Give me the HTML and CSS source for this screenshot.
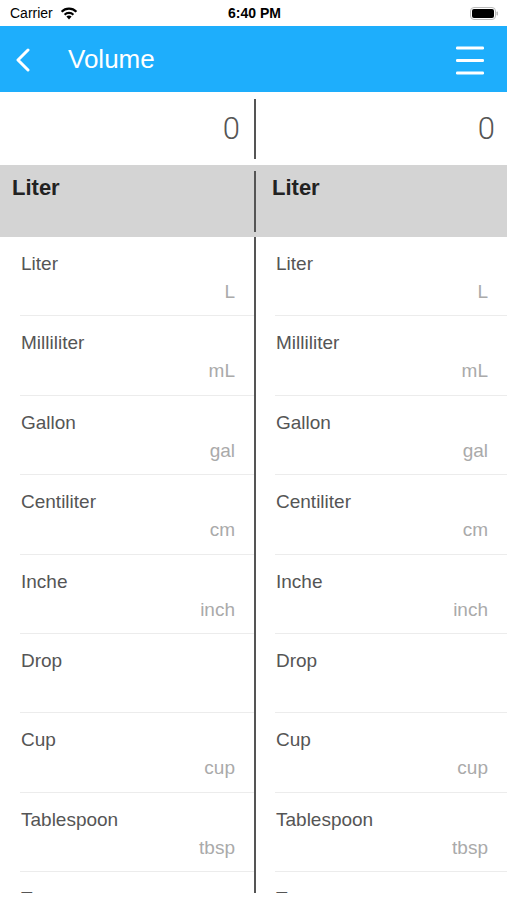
FILE: index.html
```html
<!DOCTYPE html>
<html lang="en">
<head>
  <meta charset="UTF-8">
  <title>Volume</title>
  <link rel="stylesheet" href="styles.css">
</head>
<body>
  <div class="status-bar">
    <div class="status-left">
      <span>Carrier</span>
      <svg class="wifi" width="18" height="13" viewBox="0 0 18 13">
        <path d="M9 12.5 L6.4 9.6 A3.8 3.8 0 0 1 11.6 9.6 Z" fill="#000"/>
        <path d="M4.6 7.7 A6.3 6.3 0 0 1 13.4 7.7" stroke="#000" stroke-width="2.2" fill="none"/>
        <path d="M1.6 4.7 A10.5 10.5 0 0 1 16.4 4.7" stroke="#000" stroke-width="2.2" fill="none"/>
      </svg>
    </div>
    <div class="status-time">6:40 PM</div>
    <div class="status-right">
      <svg width="29" height="13" viewBox="0 0 29 13">
        <rect x="0.5" y="0.5" width="25" height="12" rx="3.5" fill="none" stroke="#bbb"/>
        <rect x="2" y="2" width="22" height="9" rx="2" fill="#000"/>
        <rect x="26.5" y="4.5" width="1.5" height="4" rx="0.7" fill="#bbb"/>
      </svg>
    </div>
  </div>

  <div class="nav-bar">
    <svg class="back" width="16" height="24" viewBox="0 0 16 24">
      <path d="M13 2 L3 12 L13 22" stroke="#fff" stroke-width="3" fill="none" stroke-linecap="round" stroke-linejoin="round"/>
    </svg>
    <div class="nav-title">Volume</div>
    <svg class="menu" width="29" height="29" viewBox="0 0 29 29">
      <rect x="0" y="0.5" width="28" height="3" rx="1.2" fill="#fff"/>
      <rect x="0" y="13" width="28" height="3" rx="1.2" fill="#fff"/>
      <rect x="0" y="25.5" width="28" height="3" rx="1.2" fill="#fff"/>
    </svg>
  </div>

  <div class="input-row">
    <div class="col value">0</div>
    <div class="divider"></div>
    <div class="col value">0</div>
  </div>

  <div class="selected-row">
    <div class="col selected">Liter</div>
    <div class="divider"></div>
    <div class="col selected">Liter</div>
  </div>

  <div class="lists">
    <div class="col unit-list" id="leftList"></div>
    <div class="divider"></div>
    <div class="col unit-list" id="rightList"></div>
  </div>

  <script>
    const units = [
      ['Liter', 'L'],
      ['Milliliter', 'mL'],
      ['Gallon', 'gal'],
      ['Centiliter', 'cm'],
      ['Inche', 'inch'],
      ['Drop', ''],
      ['Cup', 'cup'],
      ['Tablespoon', 'tbsp'],
      ['Teaspoon', 'tsp']
    ];

    function fillList(id) {
      const list = document.getElementById(id);
      units.forEach(u => {
        const row = document.createElement('div');
        row.className = 'unit-row';
        row.innerHTML = `
          <div class="unit-name">${u[0]}</div>
          <div class="unit-symbol">${u[1] || '&nbsp;'}</div>
        `;
        list.appendChild(row);
      });
    }

    fillList('leftList');
    fillList('rightList');
  </script>
</body>
</html>
```

FILE: styles.css
```css
body {
  margin: 0;
  font-family: "Liberation Sans", Arial, sans-serif;
  background: #fff;
  width: 507px;
  height: 900px;
  overflow: hidden;
}
.status-bar {
  height: 26px;
  display: flex;
  align-items: center;
  justify-content: space-between;
  padding: 0 8px 0 10px;
  font-size: 14px;
  color: #000;
}
.status-left {
  display: flex;
  align-items: center;
  gap: 7px;
  width: 100px;
}
.status-time {
  font-weight: bold;
  font-size: 14px;
}
.status-right {
  width: 100px;
  display: flex;
  justify-content: flex-end;
}
.nav-bar {
  height: 66px;
  background: #1eaefc;
  display: flex;
  align-items: center;
  padding: 0 22px 0 15px;
  color: #fff;
}
.back {
  margin-top: 2px;
}
.nav-title {
  font-size: 26px;
  margin-left: 37px;
  flex: 1;
}
.menu {
  margin-top: 2px;
}
.input-row,
.selected-row,
.lists {
  display: flex;
}
.col {
  box-sizing: border-box;
}
.col:first-child {
  width: 254px;
}
.col:last-child {
  flex: 1;
}
.divider {
  width: 2px;
  background: #555;
}
.input-row {
  height: 73px;
}
.input-row .divider {
  margin: 7px 0 6px;
}
.value {
  text-align: right;
  font-family: Roboto, "Liberation Sans", sans-serif;
  font-weight: 300;
  font-size: 31px;
  color: #555;
  padding: 18px 14px 0 0;
}
.input-row .col:last-child {
  padding-right: 12px;
}
.selected-row {
  height: 72px;
  background: #d4d4d4;
}
.selected-row .divider {
  margin: 6px 0 5px;
}
.selected {
  font-size: 22px;
  font-weight: bold;
  color: #222;
  padding: 10px 0 0 12px;
}
.selected-row .col:last-child {
  padding-left: 16px;
}
.lists {
  height: 656px;
  overflow: hidden;
}
.unit-list {
  padding-left: 20px;
}
.unit-list:last-child {
  padding-left: 19px;
}
.unit-row {
  height: 79.4px;
  box-sizing: border-box;
  border-bottom: 1px solid #ececec;
  padding: 16px 19px 0 1px;
}
.unit-name {
  font-size: 19px;
  color: #555;
}
.unit-symbol {
  font-size: 19px;
  color: #aaa;
  text-align: right;
  margin-top: 6px;
}
```
